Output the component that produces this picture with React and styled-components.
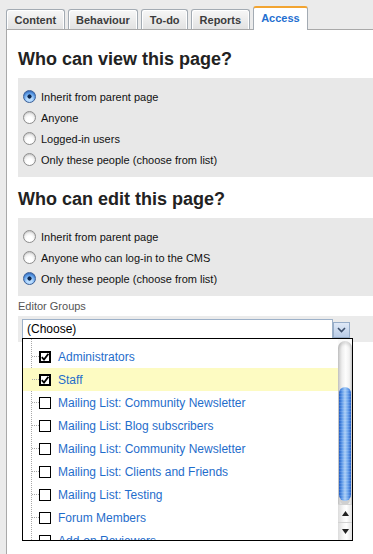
import React from "react";
import styled, { createGlobalStyle, css } from "styled-components";

const Global = createGlobalStyle`
  html, body { margin: 0; padding: 0; height: 100%; }
  body {
    background: #ebebeb;
    font-family: "Liberation Sans", Arial, Helvetica, sans-serif;
    overflow: hidden;
  }
  #root { height: 100%; }
`;

const Page = styled.div`
  height: 100%;
  display: flex;
  flex-direction: column;
  padding-top: 6px;
  box-sizing: border-box;
`;

const TabBar = styled.div`
  display: flex;
  align-items: flex-end;
  gap: 3px;
  padding-left: 6px;
  height: 23px;
  position: relative;
  z-index: 1;
`;

const Tab = styled.div`
  box-sizing: border-box;
  height: 20px;
  padding: 0 7.5px;
  display: flex;
  align-items: center;
  justify-content: center;
  font-size: 11px;
  font-weight: bold;
  color: #3c3c3c;
  border: 1px solid #a3abb3;
  border-bottom: none;
  border-radius: 3px 3px 0 0;
  background: linear-gradient(#f7f7f7, #e2e2e2);
  box-shadow: inset 1px 1px 0 #fff, inset -1px 0 0 #fff;
  ${(p) =>
    p.$active &&
    css`
      height: 24px;
      margin-bottom: -1px;
      background: #fff;
      color: #1f6fd0;
      border-top: 2px solid #f2a431;
      box-shadow: none;
      padding-bottom: 2px;
    `}
`;

const Panel = styled.div`
  flex: 1;
  margin-left: 6px;
  background: #fff;
  border-left: 1px solid #a9a9a9;
  border-top: 1px solid #a9a9a9;
  padding-left: 11px;
  display: flex;
  flex-direction: column;
`;

const Heading = styled.h2`
  margin: ${(p) => p.$top}px 0 8px 0;
  font-size: 18px;
  line-height: 22px;
  font-weight: bold;
  color: #222;
`;

const OptionBox = styled.div`
  background: #e8e8e8;
  padding: 8px 0 7px 5px;
  display: flex;
  flex-direction: column;
`;

const OptionRow = styled.label`
  display: flex;
  align-items: center;
  height: 21px;
  font-size: 11px;
  color: #111;
`;

const Radio = styled.span`
  box-sizing: border-box;
  width: 13px;
  height: 13px;
  border-radius: 50%;
  margin-right: 5px;
  border: 1px solid #8d8d8d;
  background: radial-gradient(circle at 50% 70%, #ffffff 0 30%, #e6e6e6 70%, #cfcfcf);
  box-shadow: inset 0 1px 1px rgba(0, 0, 0, 0.12);
  ${(p) =>
    p.$checked &&
    css`
      border-color: #3b5f97;
      background: radial-gradient(circle, #0d2850 0 1.8px, transparent 2.4px),
        radial-gradient(circle at 50% 75%, #b8dcff 0 25%, #5d9de8 60%, #2c64c2);
    `}
`;

const FieldLabel = styled.div`
  margin-top: 4px;
  font-size: 11px;
  line-height: 13px;
  color: #555;
`;

const SelectBar = styled.div`
  margin-top: 3px;
  height: 26px;
  box-sizing: border-box;
  background: #ebebeb;
  padding: 3px 0 0 4px;
`;

const SelectWrap = styled.div`
  position: relative;
  display: flex;
  align-items: flex-start;
`;

const SelectInput = styled.div`
  box-sizing: border-box;
  width: 311px;
  height: 20px;
  border: 1px solid #9db1c9;
  background: #fff;
  font-size: 12px;
  line-height: 18px;
  padding-left: 4px;
  color: #000;
`;

const ArrowButton = styled.div`
  box-sizing: border-box;
  width: 17px;
  height: 16px;
  margin-top: 3px;
  border: 1px solid #97adc8;
  background: linear-gradient(#dfe9f7, #b8cbe6);
  display: flex;
  align-items: center;
  justify-content: center;
`;

const Dropdown = styled.div`
  position: absolute;
  top: 19px;
  left: 0;
  width: 331px;
  height: 203px;
  box-sizing: border-box;
  border: 1px solid #000;
  background: #fff;
  display: flex;
  z-index: 2;
`;

const Items = styled.div`
  flex: 1;
  overflow: hidden;
  padding-top: 6px;
  background-image: linear-gradient(#a8a8a8 50%, transparent 50%);
  background-size: 1px 2px;
  background-repeat: repeat-y;
  background-position: 8px 0;
`;

const ItemRow = styled.div`
  display: flex;
  align-items: center;
  height: 23px;
  padding-left: 9px;
  background: ${(p) => (p.$highlight ? "#fdfbc2" : "transparent")};
`;

const Connector = styled.span`
  width: 7px;
  height: 0;
  border-top: 1px dotted #a8a8a8;
`;

const Check = styled.span`
  box-sizing: border-box;
  width: 12px;
  height: 12px;
  margin-right: 7px;
  border: ${(p) => (p.$checked ? "2px" : "1px")} solid #000;
  background: #fff;
  display: flex;
  align-items: center;
  justify-content: center;
`;

const ItemText = styled.span`
  font-size: 12px;
  color: #1f6dcb;
  white-space: nowrap;
`;

const ScrollBar = styled.div`
  width: 14px;
  display: flex;
  flex-direction: column;
  background: #fafafa;
`;

const Track = styled.div`
  height: 166px;
  box-sizing: border-box;
  padding-top: 46px;
  margin-top: 2px;
  border-radius: 7px 7px 0 0;
  background: linear-gradient(to right, #c9c9c9, #efefef 30%, #fdfdfd 55%, #f2f2f2 80%, #d3d3d3);
  box-shadow: inset 0 3px 3px rgba(0, 0, 0, 0.12);
`;

const Thumb = styled.div`
  margin: 0 1px;
  height: 114px;
  border-radius: 6px;
  background:
    repeating-linear-gradient(rgba(255, 255, 255, 0.12) 0 1px, transparent 1px 3px),
    linear-gradient(to right, #1f5cc4, #5e9ae8 25%, #a9cdf6 50%, #6aa3ec 75%, #2460c8);
  box-shadow: 0 5px 0 -1px #d0d0d0;
`;

const ArrowBox = styled.div`
  height: 17px;
  display: flex;
  align-items: center;
  justify-content: center;
  border-top: 1px solid #d2d2d2;
  background: linear-gradient(to right, #dcdcdc, #f7f7f7 40%, #ffffff 60%, #e2e2e2);
`;

const BottomArrows = styled.div`
  margin-top: auto;
  display: flex;
  flex-direction: column;
  box-sizing: border-box;
`;

const viewOptions = [
  { label: "Inherit from parent page", checked: true },
  { label: "Anyone" },
  { label: "Logged-in users" },
  { label: "Only these people (choose from list)" },
];

const editOptions = [
  { label: "Inherit from parent page" },
  { label: "Anyone who can log-in to the CMS" },
  { label: "Only these people (choose from list)", checked: true },
];

const groups = [
  { label: "Administrators", checked: true },
  { label: "Staff", checked: true, highlight: true },
  { label: "Mailing List: Community Newsletter" },
  { label: "Mailing List: Blog subscribers" },
  { label: "Mailing List: Community Newsletter" },
  { label: "Mailing List: Clients and Friends" },
  { label: "Mailing List: Testing" },
  { label: "Forum Members" },
  { label: "Add-on Reviewers" },
];

const tabs = ["Content", "Behaviour", "To-do", "Reports", "Access"];

function CheckMark() {
  return (
    <svg width="8" height="8" viewBox="0 0 8 8">
      <path d="M0.8 4.2 L3 6.6 L7.4 0.8" fill="none" stroke="#000" strokeWidth="1.8" />
    </svg>
  );
}

export default function App() {
  return (
    <>
      <Global />
      <Page>
        <TabBar>
          {tabs.map((t) => (
            <Tab key={t} $active={t === "Access"}>
              {t}
            </Tab>
          ))}
        </TabBar>
        <Panel>
          <Heading $top={18}>Who can view this page?</Heading>
          <OptionBox>
            {viewOptions.map((o) => (
              <OptionRow key={o.label}>
                <Radio $checked={o.checked} />
                {o.label}
              </OptionRow>
            ))}
          </OptionBox>
          <Heading $top={11}>Who can edit this page?</Heading>
          <OptionBox>
            {editOptions.map((o) => (
              <OptionRow key={o.label}>
                <Radio $checked={o.checked} />
                {o.label}
              </OptionRow>
            ))}
          </OptionBox>
          <FieldLabel>Editor Groups</FieldLabel>
          <SelectBar>
            <SelectWrap>
              <SelectInput>(Choose)</SelectInput>
              <ArrowButton>
                <svg width="9" height="6" viewBox="0 0 9 6">
                  <path d="M1 1 L4.5 4.5 L8 1" fill="none" stroke="#3d4f6b" strokeWidth="1.6" />
                </svg>
              </ArrowButton>
              <Dropdown>
                <Items>
                  {groups.map((g, i) => (
                    <ItemRow key={i} $highlight={g.highlight}>
                      <Connector />
                      <Check $checked={g.checked}>{g.checked && <CheckMark />}</Check>
                      <ItemText>{g.label}</ItemText>
                    </ItemRow>
                  ))}
                </Items>
                <ScrollBar>
                  <Track>
                    <Thumb />
                  </Track>
                  <BottomArrows>
                    <ArrowBox>
                      <svg width="7" height="5" viewBox="0 0 7 5">
                        <path d="M3.5 0 L7 5 L0 5 Z" fill="#222" />
                      </svg>
                    </ArrowBox>
                    <ArrowBox>
                      <svg width="7" height="5" viewBox="0 0 7 5">
                        <path d="M0 0 L7 0 L3.5 5 Z" fill="#222" />
                      </svg>
                    </ArrowBox>
                  </BottomArrows>
                </ScrollBar>
              </Dropdown>
            </SelectWrap>
          </SelectBar>
        </Panel>
      </Page>
    </>
  );
}
